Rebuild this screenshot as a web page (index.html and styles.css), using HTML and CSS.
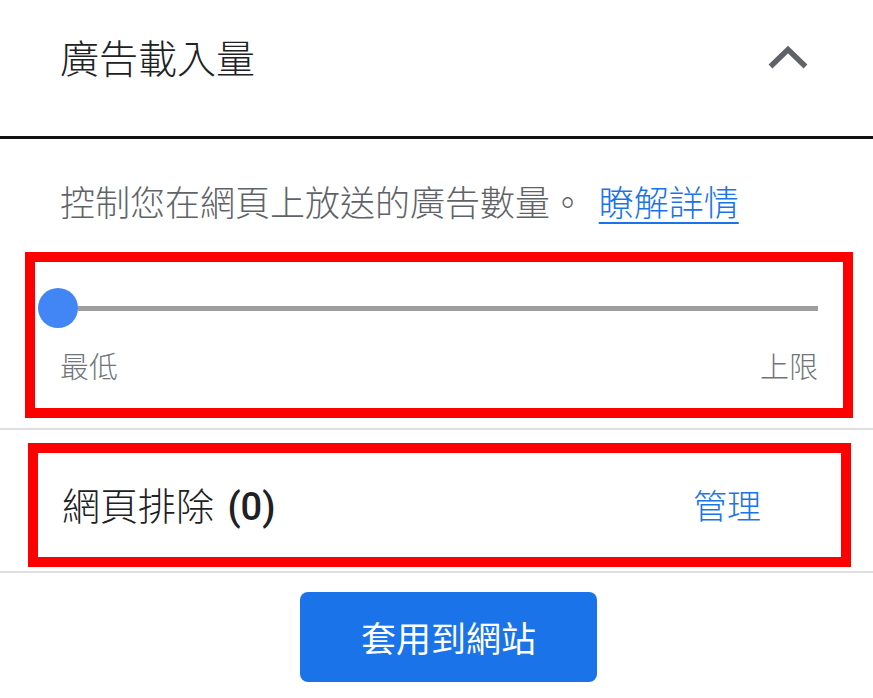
FILE: index.html
```html
<!DOCTYPE html>
<html lang="zh-Hant">
<head>
<meta charset="utf-8">
<title>廣告載入量</title>
<link rel="stylesheet" href="styles.css">
</head>
<body>
<div class="panel">
  <header class="head">
    <h2 class="title">廣告載入量</h2>
    <svg class="chevron" width="40" height="23" viewBox="0 0 40 23" aria-hidden="true">
      <polyline points="2.5,20.5 20,3.5 37.5,20.5" fill="none" stroke="#5f6368" stroke-width="5.5" stroke-linejoin="miter"/>
    </svg>
  </header>

  <section class="load">
    <p class="desc">控制您在網頁上放送的廣告數量。 <a class="link" href="#">瞭解詳情</a></p>
    <div class="slider-box">
      <div class="slider">
        <span class="thumb"></span>
        <span class="track"></span>
      </div>
      <div class="labels">
        <span>最低</span>
        <span>上限</span>
      </div>
    </div>
  </section>

  <section class="excl">
    <div class="excl-box">
      <span class="excl-label">網頁排除 <span class="count">(0)</span></span>
      <a class="manage" href="#">管理</a>
    </div>
  </section>

  <footer class="foot">
    <button class="apply" type="button">套用到網站</button>
  </footer>
</div>
</body>
</html>
```

FILE: styles.css
```css
html, body {
  margin: 0;
  padding: 0;
  background: #ffffff;
}

body {
  font-family: "Noto Sans CJK TC", "Noto Sans", sans-serif;
  font-weight: 300;
  color: #202124;
  width: 873px;
  height: 698px;
  overflow: hidden;
}

.panel {
  display: flex;
  flex-direction: column;
}

/* header */
.head {
  height: 139px;
  box-sizing: border-box;
  border-bottom: 3px solid #111111;
  display: flex;
  align-items: flex-start;
  justify-content: space-between;
  padding: 32px 65px 0 60px;
}

.title {
  margin: 0;
  font-size: 39px;
  line-height: 48px;
  font-weight: 300;
  color: #202124;
}

.chevron {
  display: block;
  margin-top: 13.5px;
  overflow: visible;
}

/* ad load section */
.load {
  padding: 38px 0 10px;
  border-bottom: 2px solid #dfdfe3;
}

.desc {
  margin: 0 0 27px 60px;
  font-size: 35px;
  line-height: 48px;
  color: #5f6368;
  white-space: nowrap;
}

.link {
  margin-left: 6px;
  color: #1a73e8;
  text-decoration: underline;
  text-decoration-thickness: 2px;
  text-underline-offset: 6px;
}

.slider-box {
  margin: 0 20px 0 25px;
  border: 10px solid #ff0000;
  height: 120px;
  padding-top: 26px;
  box-sizing: content-box;
  display: flex;
  flex-direction: column;
}

.slider {
  display: flex;
  align-items: center;
  height: 40px;
  margin: 0 25px 0 3px;
}

.thumb {
  width: 40px;
  height: 40px;
  border-radius: 50%;
  background: #4285f4;
  flex: none;
}

.track {
  flex: 1;
  height: 5px;
  background: #9e9e9e;
}

.labels {
  display: flex;
  justify-content: space-between;
  margin: 17px 25px 0 25px;
  font-size: 29px;
  line-height: 40px;
  color: #70757a;
}

/* exclusions */
.excl {
  padding: 13px 22px 4px 28px;
  border-bottom: 2px solid #dfdfe3;
}

.excl-box {
  border: 10px solid #ff0000;
  height: 104px;
  box-sizing: content-box;
  display: flex;
  align-items: center;
  justify-content: space-between;
  padding: 0 80px 0 24px;
}

.excl-label {
  font-size: 38px;
  line-height: 48px;
  color: #202124;
  white-space: nowrap;
}

.count {
  margin-left: 5px;
  font-family: "Roboto", "Noto Sans", sans-serif;
  font-weight: 500;
}

.manage {
  font-size: 34px;
  line-height: 48px;
  color: #1a73e8;
  text-decoration: none;
}

/* footer */
.foot {
  display: flex;
  justify-content: center;
  padding: 19px 0 0 24px;
}

.apply {
  width: 297px;
  height: 90px;
  border: none;
  border-radius: 8px;
  background: #1a73e8;
  color: #ffffff;
  font-family: "Noto Sans CJK TC", "Noto Sans", sans-serif;
  font-weight: 400;
  font-size: 35px;
  line-height: 48px;
  padding: 0;
  cursor: pointer;
}
```
